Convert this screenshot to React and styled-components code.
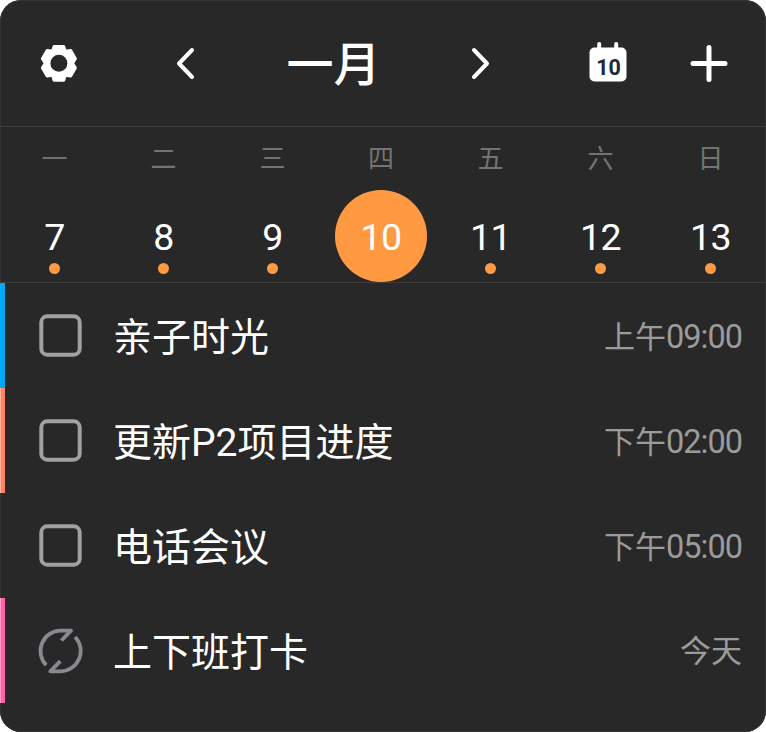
import React from "react";
import styled, { createGlobalStyle } from "styled-components";

const GlobalStyle = createGlobalStyle`
  * { box-sizing: border-box; }
  body {
    margin: 0;
    background: #fff;
    font-family: Roboto, "Noto Sans CJK SC", sans-serif;
  }
`;

const Card = styled.main`
  width: 766px;
  height: 732px;
  overflow: hidden;
  border-radius: 21px;
  background: #282828;
  box-shadow: inset 0 0 0 1px #343434;
  color: #fff;
`;

const Header = styled.header`
  display: grid;
  grid-template-columns: 117px 136px 161px 133px 121px 81px;
  align-items: center;
  height: 127px;
  border-bottom: 1px solid #3e3e3e;
`;

const IconButton = styled.button`
  display: flex;
  align-items: center;
  justify-content: center;
  width: 100%;
  height: 100%;
  padding: 0;
  padding-bottom: ${(p) => p.$lift || 0}px;
  border: 0;
  background: none;
  color: inherit;

  svg { display: block; flex: none; }
`;

const Month = styled.h1`
  margin: 0;
  padding-top: 3px;
  font-size: 47px;
  font-weight: 500;
  line-height: 60px;
  text-align: center;
  white-space: nowrap;
`;

const Week = styled.section`
  display: grid;
  grid-template-columns: 109px 109px 109px 108px 111px 109px 111px;
  height: 156px;
  border-bottom: 1px solid #3e3e3e;
`;

const Day = styled.div`
  display: flex;
  flex-direction: column;
  align-items: center;
  padding-top: 13px;
`;

const Weekday = styled.span`
  height: 38px;
  color: #737373;
  font-size: 26px;
  line-height: 38px;
`;

const DateBubble = styled.div`
  display: flex;
  flex-direction: column;
  align-items: center;
  width: 92px;
  height: 92px;
  margin-top: 12px;
  padding-top: 25px;
  border-radius: 50%;
  background: ${(p) => (p.$selected ? "#ff9a42" : "transparent")};
  font-size: 37.5px;
  letter-spacing: -0.6px;
  line-height: 44px;
`;

const Dot = styled.i`
  width: 11px;
  height: 11px;
  margin-top: 4px;
  border-radius: 50%;
  background: #ff9a42;
`;

const List = styled.ul`
  margin: 0;
  padding: 0;
  list-style: none;
`;

const Task = styled.li`
  display: grid;
  grid-template-columns: 113px 1fr auto;
  align-items: center;
  height: 105px;
  padding-right: 24px;
  background: linear-gradient(${(p) => p.$accent}, ${(p) => p.$accent}) left / 5px 100% no-repeat;
  box-shadow: ${(p) => (p.$edge ? `inset 1px 0 ${p.$edge}` : "none")};
`;

const Marker = styled.span`
  display: flex;
  padding-left: 37px;
`;

const Title = styled.span`
  padding-top: 4px;
  font-size: 39px;
  line-height: 56px;
  white-space: nowrap;
`;

const Time = styled.time`
  padding-top: 3px;
  color: #9b9b9b;
  font-size: 31px;
  line-height: 46px;
  white-space: nowrap;
`;

const Clock = styled.span`
  font-size: 32.5px;
  letter-spacing: -1px;
`;

const GearIcon = () => (
  <svg width="38" height="38" viewBox="-18.9 -19.3 38 38">
    <path
      fill="#fff"
      stroke="#fff"
      strokeWidth="3"
      strokeLinejoin="round"
      fillRule="evenodd"
      d="M-4.8-16.7H4.8L6.4-12L11.8-12.8L16.5-4.5L13.6 0L16.5 4.5L11.8 12.8L6.4 12L4.8 16.9H-4.8L-6.4 12L-11.8 12.8L-16.5 4.5L-13.6 0L-16.5-4.5L-11.8-12.8L-6.4-12ZM10 0A10 10 0 1 0-10 0A10 10 0 1 0 10 0Z"
    />
  </svg>
);

const ChevronIcon = ({ direction }) => (
  <svg width="20" height="34" viewBox="0 0 20 34" fill="none" stroke="#fff" strokeWidth="4" strokeLinecap="round" strokeLinejoin="round">
    <path d={direction === "left" ? "M17 4L4 17.5L17 31" : "M3 4L16 17.5L3 31"} />
  </svg>
);

const CalendarIcon = () => (
  <svg width="38" height="42" viewBox="0 0 38 42">
    <rect x="0.5" y="6.5" width="37" height="34" rx="5" fill="#fff" />
    <path d="M10.2 3V9M27.2 3V9" stroke="#fff" strokeWidth="4" strokeLinecap="round" />
    <text x="19.6" y="33.5" textAnchor="middle" fill="#202938" fontFamily="Roboto" fontSize="21.5" fontWeight="700">10</text>
  </svg>
);

const PlusIcon = () => (
  <svg width="38" height="38" viewBox="0 0 38 38" stroke="#fff" strokeWidth="5" strokeLinecap="round">
    <path d="M19 3.5V35.5M3 19.5H35" />
  </svg>
);

const CheckboxIcon = () => (
  <svg width="46" height="46" viewBox="0 0 46 46" fill="none" stroke="#a1a1a1" strokeWidth="4">
    <rect x="4.3" y="3.3" width="38.4" height="38.4" rx="6" />
  </svg>
);

const HabitIcon = () => (
  <svg width="46" height="46" viewBox="0 0 46 46" fill="none" stroke="#878b90" strokeWidth="3.8" strokeLinejoin="round">
    <path d="M9.2 37.1A20.3 20.3 0 0 1 23.5 2.7H34L24.4 12.5" />
    <path d="M38.1 9A20.3 20.3 0 0 1 23.8 43.3H13.3L23.3 33.2" />
  </svg>
);

const days = [
  ["一", 7], ["二", 8], ["三", 9], ["四", 10], ["五", 11], ["六", 12], ["日", 13],
];

const tasks = [
  { title: "亲子时光", label: "上午", clock: "09:00", accent: "#00a8f8" },
  { title: "更新P2项目进度", label: "下午", clock: "02:00", accent: "#ff8468", edge: "#ffb39f" },
  { title: "电话会议", label: "下午", clock: "05:00", accent: "transparent" },
  { title: "上下班打卡", label: "今天", accent: "#ff62a5", edge: "#ff9bc5", habit: true },
];

export default function App() {
  return (
    <>
      <GlobalStyle />
      <Card>
        <Header>
          <IconButton aria-label="设置"><GearIcon /></IconButton>
          <IconButton aria-label="上个月"><ChevronIcon direction="left" /></IconButton>
          <Month>一月</Month>
          <IconButton aria-label="下个月"><ChevronIcon direction="right" /></IconButton>
          <IconButton aria-label="今天" $lift={3}><CalendarIcon /></IconButton>
          <IconButton aria-label="添加"><PlusIcon /></IconButton>
        </Header>
        <Week>
          {days.map(([weekday, date]) => (
            <Day key={date}>
              <Weekday>{weekday}</Weekday>
              <DateBubble $selected={date === 10}>
                {date}
                {date !== 10 && <Dot />}
              </DateBubble>
            </Day>
          ))}
        </Week>
        <List>
          {tasks.map((task) => (
            <Task key={task.title} $accent={task.accent} $edge={task.edge}>
              <Marker>{task.habit ? <HabitIcon /> : <CheckboxIcon />}</Marker>
              <Title>{task.title}</Title>
              <Time>
                {task.label}
                {task.clock && <Clock>{task.clock}</Clock>}
              </Time>
            </Task>
          ))}
        </List>
      </Card>
    </>
  );
}
